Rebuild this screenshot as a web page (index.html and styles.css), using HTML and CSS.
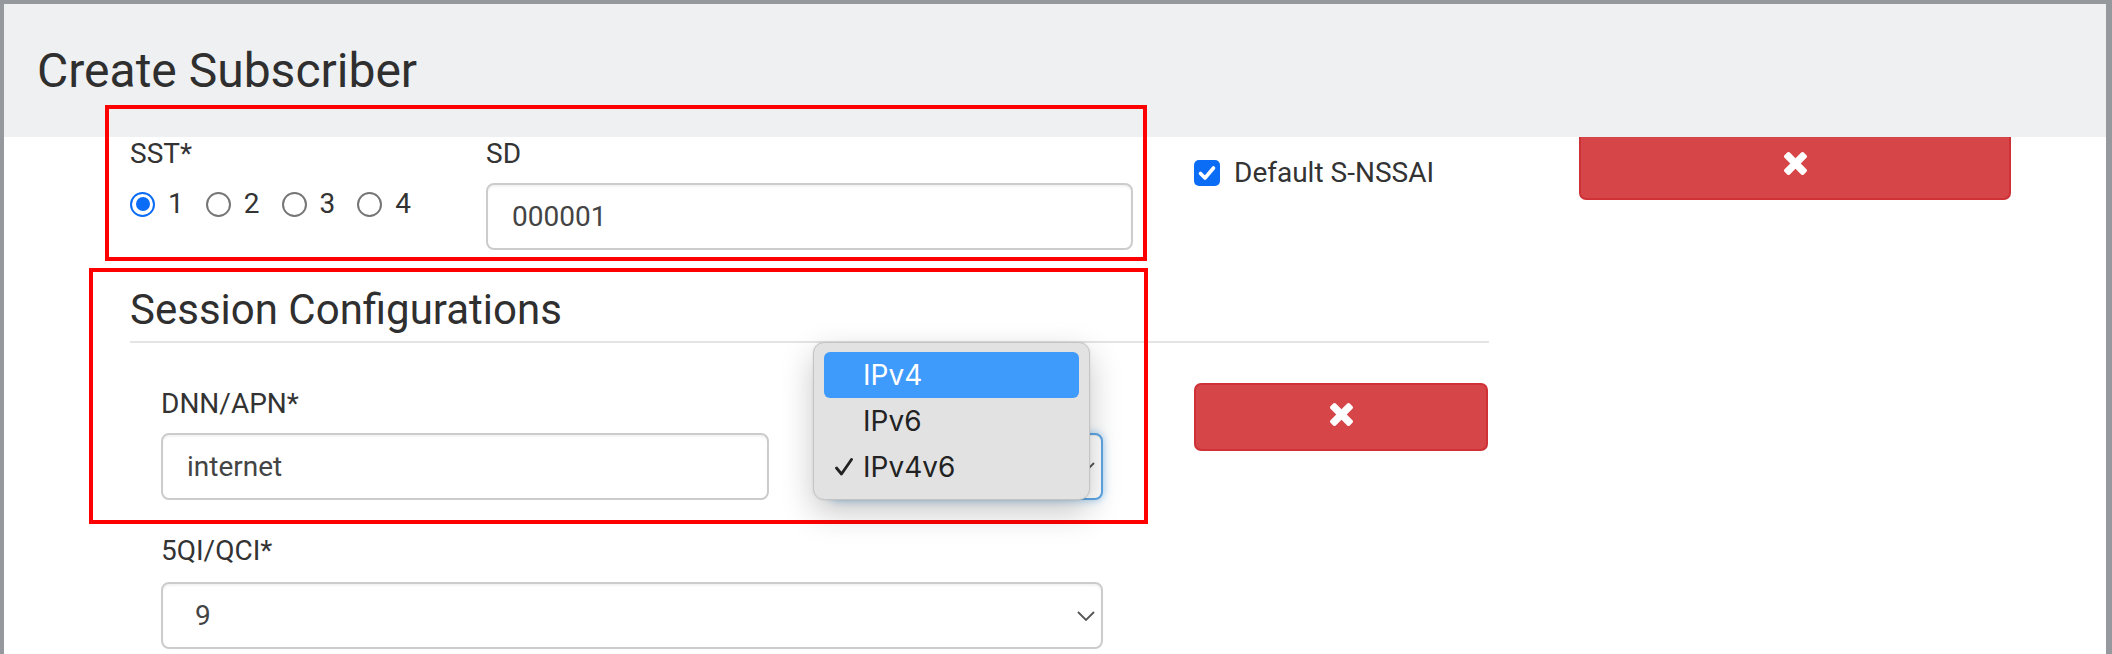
FILE: index.html
```html
<!DOCTYPE html>
<html lang="en">
<head>
<meta charset="utf-8">
<title>Create Subscriber</title>
<link rel="stylesheet" href="styles.css">
</head>
<body>
<div class="window">
  <header class="modal-header">
    <h1 class="title">Create Subscriber</h1>
  </header>

  <main class="modal-body">
    <div class="slice-row">
      <div class="sst-col">
        <div class="label">SST*</div>
        <div class="radios">
          <span class="radio-item"><span class="radio checked"></span><span class="radio-text">1</span></span>
          <span class="radio-item"><span class="radio"></span><span class="radio-text">2</span></span>
          <span class="radio-item"><span class="radio"></span><span class="radio-text">3</span></span>
          <span class="radio-item"><span class="radio"></span><span class="radio-text">4</span></span>
        </div>
      </div>
      <div class="sd-col">
        <div class="label">SD</div>
        <div class="input">000001</div>
      </div>
      <div class="default-col">
        <span class="checkbox">
          <svg viewBox="0 0 26 26" width="26" height="26"><path d="M6.5 13.5 L11 18 L19.5 8" fill="none" stroke="#fff" stroke-width="3.6" stroke-linecap="round" stroke-linejoin="round"/></svg>
        </span>
        <span class="check-text">Default S-NSSAI</span>
      </div>
      <div class="btn-col">
        <button class="btn-danger btn-cut" type="button" aria-label="Remove slice">
          <svg class="x-icon" viewBox="110 366 1188 1188" width="23" height="23"><path fill="#fff" d="M1298 1322q0 40-28 68l-136 136q-28 28-68 28t-68-28l-294-294-294 294q-28 28-68 28t-68-28l-136-136q-28-28-28-68t28-68l294-294-294-294q-28-28-28-68t28-68l136-136q28-28 68-28t68 28l294 294 294-294q28-28 68-28t68 28l136 136q28 28 28 68t-28 68l-294 294 294 294q28 28 28 68z"/></svg>
        </button>
      </div>
    </div>

    <section class="session">
      <h2 class="section-title">Session Configurations</h2>
      <div class="session-row">
        <div class="session-fields">
          <div class="field-grid">
            <div class="field">
              <div class="label">DNN/APN*</div>
              <div class="input">internet</div>
            </div>
            <div class="field">
              <div class="label"></div>
              <div class="select focused" aria-label="PDU session type">
                <svg class="chevron" viewBox="0 0 18 10" width="18" height="10"><path d="M1 1 L9 9 L17 1" fill="none" stroke="#555" stroke-width="1.8"/></svg>
              </div>
            </div>
          </div>
          <div class="field qci">
            <div class="label">5QI/QCI*</div>
            <div class="select">
              <span class="select-value">9</span>
              <svg class="chevron" viewBox="0 0 18 10" width="18" height="10"><path d="M1 1 L9 9 L17 1" fill="none" stroke="#555" stroke-width="1.8"/></svg>
            </div>
          </div>
        </div>
        <button class="btn-danger btn-session" type="button" aria-label="Remove session">
          <svg class="x-icon" viewBox="110 366 1188 1188" width="23" height="23"><path fill="#fff" d="M1298 1322q0 40-28 68l-136 136q-28 28-68 28t-68-28l-294-294-294 294q-28 28-68 28t-68-28l-136-136q-28-28-28-68t28-68l294-294-294-294q-28-28-28-68t28-68l136-136q28-28 68-28t68 28l294 294 294-294q28-28 68-28t68 28l136 136q28 28 28 68t-28 68l-294 294 294 294q28 28 28 68z"/></svg>
        </button>
      </div>
    </section>
  </main>

  <div class="annot annot-slice"></div>
  <div class="annot annot-session"></div>

  <ul class="popup">
    <li class="popup-item active">IPv4</li>
    <li class="popup-item">IPv6</li>
    <li class="popup-item selected">
      <svg class="tick" viewBox="0 0 18 18" width="18" height="18"><path d="M1.5 10 L6.5 16 L16.5 1.5" fill="none" stroke="#222" stroke-width="2.8" stroke-linecap="round" stroke-linejoin="round"/></svg>
      IPv4v6
    </li>
  </ul>
</div>
</body>
</html>
```

FILE: styles.css
```css
html, body {
  margin: 0;
  padding: 0;
}

body {
  background: #95989c;
  font-family: Roboto, "Noto Sans", sans-serif;
  color: #333;
}

.window {
  position: relative;
  margin: 4px 6px 0 4px;
  height: 650px;
  background: #fff;
  overflow: hidden;
}

/* header */
.modal-header {
  height: 133px;
  box-sizing: border-box;
  padding: 43px 0 0 33px;
  background: #eff0f2;
}

.title {
  margin: 0;
  font-size: 48px;
  line-height: 48px;
  font-weight: 400;
  color: #2f2f2f;
}

/* body */
.modal-body {
  padding-left: 126px;
}

.label {
  font-size: 28px;
  line-height: 34px;
  height: 34px;
  color: #333;
}

.slice-row {
  display: flex;
  align-items: flex-start;
}

.sst-col {
  width: 356px;
}

.radios {
  display: flex;
  align-items: center;
  margin-top: 16px;
  height: 34px;
}

.radio-item {
  display: flex;
  align-items: center;
  margin-right: 22px;
}

.radio {
  width: 25px;
  height: 25px;
  box-sizing: border-box;
  border: 2px solid #767676;
  border-radius: 50%;
  background: #fff;
  margin-right: 13px;
  display: flex;
  align-items: center;
  justify-content: center;
}

.radio.checked {
  border-color: #0b6cf5;
}

.radio.checked::after {
  content: "";
  width: 14px;
  height: 14px;
  border-radius: 50%;
  background: #0b6cf5;
}

.radio-text {
  font-size: 28px;
  line-height: 34px;
  color: #333;
}

.sd-col {
  width: 647px;
}

.input,
.select {
  box-sizing: border-box;
  height: 67px;
  border: 2px solid #cccccc;
  border-radius: 8px;
  background: #fff;
  font-size: 28px;
  line-height: 63px;
  color: #444;
  padding-left: 24px;
  box-shadow: inset 0 2px 2px rgba(0, 0, 0, 0.05);
}

.sd-col .input {
  margin-top: 12px;
}

.default-col {
  margin-left: 61px;
  width: 385px;
  margin-top: 19px;
  display: flex;
  align-items: center;
  height: 34px;
}

.checkbox {
  width: 26px;
  height: 26px;
  border-radius: 5px;
  background: #0b6cf5;
  display: flex;
  margin-right: 14px;
}

.check-text {
  font-size: 28px;
  line-height: 34px;
  color: #333;
}

.btn-col {
  width: 432px;
}

.btn-danger {
  display: flex;
  align-items: center;
  justify-content: center;
  box-sizing: border-box;
  margin: 0;
  padding: 0;
  background: #d64547;
  border: 2px solid #cf3236;
  border-radius: 7px;
  cursor: pointer;
}

.btn-cut {
  width: 432px;
  height: 63px;
  border-top: 0;
  border-radius: 0 0 7px 7px;
  padding-bottom: 9px;
}

/* session block */
.session {
  width: 1359px;
}

.section-title {
  margin: 37px 0 0 0;
  padding-bottom: 8px;
  border-bottom: 2px solid #e4e4e4;
  font-size: 42px;
  line-height: 46px;
  font-weight: 400;
  color: #2f2f2f;
}

.session-row {
  display: flex;
  align-items: flex-start;
  padding: 40px 0 0 31px;
}

.session-fields {
  width: 942px;
  margin-top: 4px;
}

.field-grid {
  display: grid;
  grid-template-columns: 608px 274px;
  column-gap: 60px;
}

.field .input,
.field .select {
  margin-top: 12px;
}

.select {
  position: relative;
  padding-left: 32px;
}

.select .chevron {
  position: absolute;
  right: 6px;
  top: 27px;
}

.select.focused {
  border-color: #5ea6e3;
  box-shadow: inset 0 1px 1px rgba(0, 0, 0, 0.075), 0 0 9px rgba(102, 175, 233, 0.65);
}

.field.qci {
  margin-top: 34px;
}

.field.qci .select {
  margin-top: 14px;
}

.btn-session {
  margin-left: 91px;
  width: 294px;
  height: 68px;
  padding-bottom: 6px;
}

/* review annotations */
.annot {
  position: absolute;
  box-sizing: border-box;
  border: 4px solid #ff0000;
  pointer-events: none;
}

.annot-slice {
  left: 101px;
  top: 101px;
  width: 1042px;
  height: 156px;
}

.annot-session {
  left: 85px;
  top: 264px;
  width: 1059px;
  height: 256px;
}

/* native-like select popup */
.popup {
  position: absolute;
  left: 809px;
  top: 338px;
  width: 277px;
  height: 158px;
  box-sizing: border-box;
  margin: 0;
  padding: 9px 10px 0 10px;
  list-style: none;
  background: #e2e2e2;
  border: 1px solid #c4c4c4;
  border-radius: 11px;
  box-shadow: 0 12px 32px rgba(0, 0, 0, 0.22), 0 0 3px rgba(0, 0, 0, 0.08);
  font-family: Inter, "Noto Sans", sans-serif;
  font-size: 28px;
  color: #222;
}

.popup-item {
  position: relative;
  height: 46px;
  line-height: 46px;
  padding-left: 39px;
  border-radius: 6px;
}

.popup-item.active {
  background: #3f9bfb;
  color: #fff;
}

.popup-item .tick {
  position: absolute;
  left: 11px;
  top: 14px;
}
```
